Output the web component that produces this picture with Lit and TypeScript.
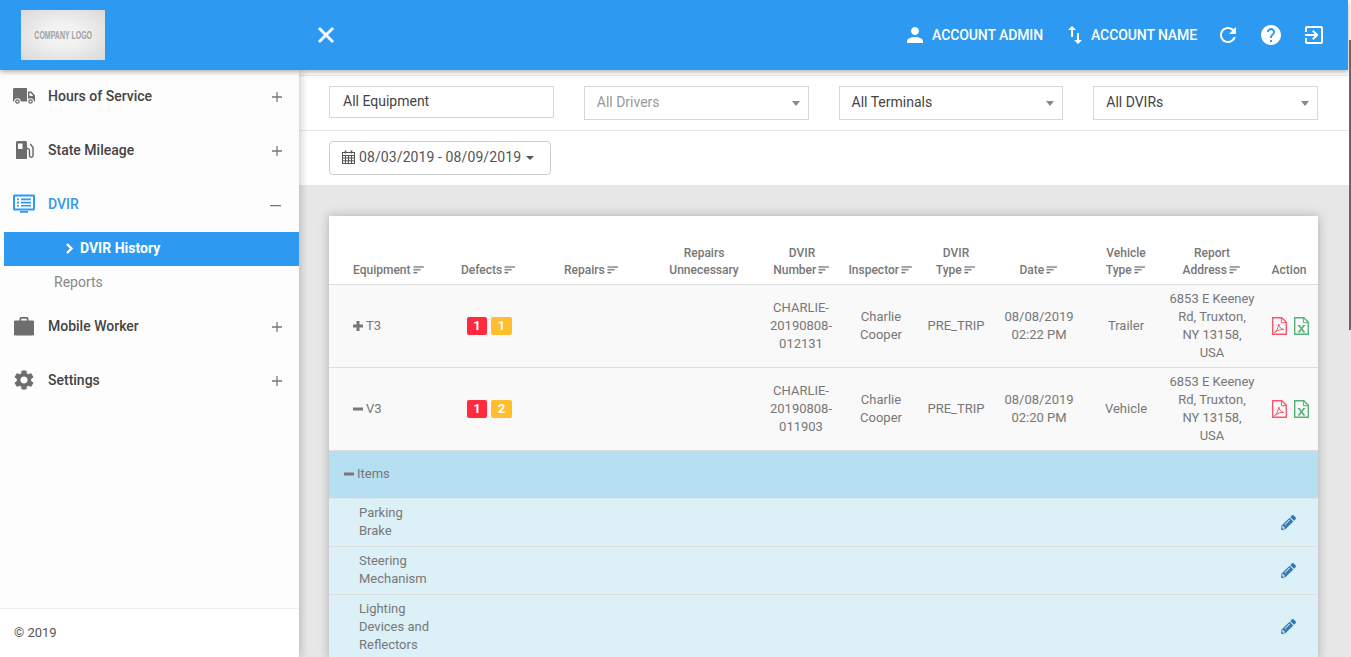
import {LitElement, html, css, svg} from 'lit';
import {customElement} from 'lit/decorators.js';

const icon = (d: string, cls = '', box = '0 0 24 24') =>
  html`<svg class=${cls} viewBox=${box} fill="currentColor"><path d=${d}></path></svg>`;

const P = {
  gear: 'M19.14 12.94c.04-.3.06-.61.06-.94 0-.32-.02-.64-.07-.94l2.03-1.58c.18-.14.23-.41.12-.61l-1.92-3.32c-.12-.22-.37-.29-.59-.22l-2.39.96c-.5-.38-1.03-.7-1.62-.94l-.36-2.54c-.04-.24-.24-.41-.48-.41h-3.84c-.24 0-.43.17-.47.41l-.36 2.54c-.59.24-1.13.57-1.62.94l-2.39-.96c-.22-.08-.47 0-.59.22L2.74 8.87c-.12.21-.08.47.12.61l2.03 1.58c-.05.3-.09.63-.09.94s.02.64.07.94l-2.03 1.58c-.18.14-.23.41-.12.61l1.92 3.32c.12.22.37.29.59.22l2.39-.96c.5.38 1.03.7 1.62.94l.36 2.54c.05.24.24.41.48.41h3.84c.24 0 .44-.17.47-.41l.36-2.54c.59-.24 1.13-.56 1.62-.94l2.39.96c.22.08.47 0 .59-.22l1.92-3.32c.12-.22.07-.47-.12-.61l-2.01-1.58zM12 15.6c-1.98 0-3.6-1.62-3.6-3.6s1.62-3.6 3.6-3.6 3.6 1.62 3.6 3.6-1.62 3.6-3.6 3.6z',
  close: 'M19 6.41L17.59 5 12 10.59 6.41 5 5 6.41 10.59 12 5 17.59 6.41 19 12 13.41 17.59 19 19 17.59 13.41 12z',
  person: 'M12 12c2.21 0 4-1.79 4-4s-1.79-4-4-4-4 1.79-4 4 1.79 4 4 4zm0 2c-2.67 0-8 1.34-8 4v2h16v-2c0-2.66-5.33-4-8-4z',
  swap: 'M16 17.01V10h-2v7.01h-3L15 21l4-3.99h-3zM9 3L5 6.99h3V14h2V6.99h3L9 3z',
  refresh: 'M17.65 6.35C16.2 4.9 14.21 4 12 4c-4.42 0-7.99 3.58-7.99 8s3.57 8 7.99 8c3.73 0 6.84-2.55 7.73-6h-2.08c-.82 2.33-3.04 4-5.65 4-3.31 0-6-2.69-6-6s2.69-6 6-6c1.66 0 3.14.69 4.22 1.78L13 11h7V4l-2.35 2.35z',
  help: 'M12 2C6.48 2 2 6.48 2 12s4.48 10 10 10 10-4.48 10-10S17.52 2 12 2zm1 17h-2v-2h2v2zm2.07-7.75l-.9.92C13.45 12.9 13 13.5 13 15h-2v-.5c0-1.1.45-2.1 1.17-2.83l1.24-1.26c.37-.36.59-.86.59-1.41 0-1.1-.9-2-2-2s-2 .9-2 2H8c0-2.21 1.79-4 4-4s4 1.79 4 4c0 .88-.36 1.68-.93 2.25z',
  exit: 'M10.09 15.59L11.5 17l5-5-5-5-1.41 1.41L12.67 11H3v2h9.67l-2.58 2.59zM19 3H5c-1.11 0-2 .9-2 2v4h2V5h14v14H5v-4H3v4c0 1.1.89 2 2 2h14c1.1 0 2-.9 2-2V5c0-1.1-.9-2-2-2z',
  sort: 'M3 18h6v-2H3v2zM3 6v2h18V6H3zm0 7h12v-2H3v2z',
  pencil: 'M497.9 142.1l-46.1 46.1c-4.7 4.7-12.3 4.7-17 0l-111-111c-4.7-4.7-4.7-12.3 0-17l46.1-46.1c18.7-18.7 49.1-18.7 67.9 0l60.1 60.1c18.8 18.7 18.8 49.1 0 67.9zM284.2 99.8L21.6 362.4.4 483.9c-2.9 16.4 11.4 30.6 27.8 27.8l121.5-21.3 262.6-262.6c4.7-4.7 4.7-12.3 0-17l-111-111c-4.8-4.7-12.4-4.7-17.1 0zM124.1 339.9c-5.5-5.5-5.5-14.3 0-19.8l154-154c5.500-5.500 14.300-5.500 19.800 0s5.500 14.300 0 19.800l-154 154c-5.500 5.500-14.300 5.500-19.800 0zM88 424h48v36.300l-64.500 11.300-31.100-31.100L51.700 376H88v48z',
};

const truckIcon = html`<svg class="nav-icon" viewBox="0 0 22 22" fill="currentColor">
  <path d="M0 4.500C0 3.700.7 3 1.500 3H14v13.500H0z"></path>
  <path fill-rule="evenodd" d="M15 6.500h3.500L22 10.500v6h-7zM16.500 8v3h3.800l-2.500-3z"></path>
  <circle cx="4.500" cy="16.500" r="3.300" fill="#fdfdfd"></circle>
  <circle cx="4.500" cy="16.500" r="1.700" fill="none" stroke="currentColor" stroke-width="1.300"></circle>
  <circle cx="17.500" cy="16.500" r="3.300" fill="#fdfdfd"></circle>
  <circle cx="17.500" cy="16.500" r="1.700" fill="none" stroke="currentColor" stroke-width="1.300"></circle>
</svg>`;

const gasIcon = html`<svg class="nav-icon" viewBox="0 0 22 22" fill="currentColor">
  <path fill-rule="evenodd" d="M3 3.500C3 2.700 3.700 2 4.500 2h8c.8 0 1.500.7 1.500 1.500V20H3zM5 4.500V10h4.500V4.500z"></path>
  <path d="M14 9.500c2-.2 2.500 1 2.500 2.500v4.500c0 2.200 3.500 2.200 3.500 0V8.500L17.300 5" fill="none" stroke="currentColor" stroke-width="1.500"></path>
</svg>`;

const dvirIcon = html`<svg class="nav-icon" viewBox="0 0 22 22" fill="currentColor">
  <path fill-rule="evenodd" d="M1.500 1.500h19c.8 0 1.500.7 1.500 1.500v13c0 .8-.7 1.500-1.500 1.500h-19C.7 17.500 0 16.800 0 16V3c0-.8.7-1.500 1.500-1.500zM2 3.500V15.500h18V3.500z"></path>
  <path d="M4 5.500h2v1.700H4zM8 5.500h10v1.700H8zM4 8.700h2v1.700H4zM8 8.700h10v1.700H8zM4 11.900h2v1.700H4zM8 11.900h10v1.700H8zM7 18h8v1.800H7z"></path>
</svg>`;

const caseIcon = html`<svg class="nav-icon" viewBox="0 0 22 22" fill="currentColor">
  <path fill-rule="evenodd" d="M2.500 5.500H6.500V3.500C6.500 2.700 7.200 2 8 2h6c.8 0 1.500.7 1.500 1.500v2h4c1 0 1.500.6 1.500 1.500v12c0 1-.6 1.500-1.500 1.500h-17C1.500 20.500 1 20 1 19V7c0-1 .6-1.500 1.500-1.500zM8.200 3.700v1.800h5.600V3.700z"></path>
</svg>`;

const calendarIcon = html`<svg class="cal" viewBox="0 0 13 14" fill="none" stroke="currentColor" stroke-width="1">
  <rect x=".5" y="2.500" width="12" height="11"></rect>
  <path d="M.5 5.500h12M.5 8h12M.5 10.800h12M3.500 5.500v8M6.500 5.500v8M9.500 5.500v8"></path>
  <path d="M3.500 .5v3M9.500 .5v3" stroke-width="1.600"></path>
</svg>`;

const pdfIcon = html`<svg class="file pdf" viewBox="0 0 15 18" fill="none" stroke="currentColor" stroke-width="1.400">
  <path d="M.7.7h9.100l4.500 4.500v12.100H.7z"></path>
  <path d="M9.400.7v5h4.900" stroke-width="1"></path>
  <path d="M2.500 15.500c2-1 3.500-4 4.300-8.500.6 3.500 2.200 5 5.200 5.500-3-.3-6.500.6-9.500 3z" stroke-width="1"></path>
</svg>`;

const xlsIcon = html`<svg class="file xls" viewBox="0 0 15 18" fill="none" stroke="currentColor" stroke-width="1.400">
  <path d="M.7.7h9.100l4.500 4.500v12.100H.7z"></path>
  <path d="M9.400.7v5h4.900" stroke-width="1"></path>
  <path d="M3.800 8.500h2.400M8.800 8.500h2.400M3.800 15h2.400M8.800 15h2.400" stroke-width="1"></path>
  <path d="M5 8.500l5 6.500M10 8.500l-5 6.500" stroke-width="1.600"></path>
</svg>`;

interface NavItem { label: string; icon: unknown; open?: boolean; subs?: string[]; }

const NAV: NavItem[] = [
  {label: 'Hours of Service', icon: truckIcon},
  {label: 'State Mileage', icon: gasIcon},
  {label: 'DVIR', icon: dvirIcon, open: true, subs: ['DVIR History', 'Reports']},
  {label: 'Mobile Worker', icon: caseIcon},
  {label: 'Settings', icon: icon(P.gear, 'nav-icon gear')},
];

const COLUMNS: Array<{label: string; cls?: string; sort?: boolean}> = [
  {label: 'Equipment', cls: 'left first', sort: true},
  {label: 'Defects', cls: 'left', sort: true},
  {label: 'Repairs', cls: 'left', sort: true},
  {label: 'Repairs\nUnnecessary'},
  {label: 'DVIR\nNumber', sort: true},
  {label: 'Inspector', sort: true},
  {label: 'DVIR\nType', sort: true},
  {label: 'Date', cls: 'nudge', sort: true},
  {label: 'Vehicle\nType', sort: true},
  {label: 'Report\nAddress', sort: true},
  {label: 'Action', cls: 'nudge'},
];

const WIDTHS = [124, 103, 88, 120, 76, 82, 68, 100, 72, 100, 56];

const ROWS = [
  {open: false, eq: 'T3', red: 1, amber: 1, num: 'CHARLIE-\n20190808-\n012131', date: '08/08/2019\n02:22 PM', type: 'Trailer'},
  {open: true, eq: 'V3', red: 1, amber: 2, num: 'CHARLIE-\n20190808-\n011903', date: '08/08/2019\n02:20 PM', type: 'Vehicle'},
];

const ITEMS = ['Parking\nBrake', 'Steering\nMechanism', 'Lighting\nDevices and\nReflectors'];

@customElement('app-root')
export class AppRoot extends LitElement {
  static styles = css`
    :host {
      display: block;
      position: relative;
      width: 1351px;
      height: 657px;
      overflow: hidden;
      background: #fff;
      font-family: Roboto, "Liberation Sans", sans-serif;
      font-size: 13px;
      color: #777;
    }
    svg { display: block; flex: none; }

    .header {
      position: relative;
      z-index: 3;
      box-sizing: border-box;
      width: 1348px;
      height: 70px;
      display: flex;
      align-items: center;
      background: #2d99f0;
      box-shadow: 0 2px 5px rgba(0, 0, 0, 0.3);
      color: #fff;
      padding-left: 21px;
    }
    .logo {
      width: 84px;
      height: 50px;
      display: flex;
      align-items: center;
      justify-content: center;
      background: radial-gradient(ellipse at center, #f2f2f2 30%, #d9d9d9 100%);
      color: #a0a0a0;
      font-family: "Liberation Sans", sans-serif;
      font-size: 10px;
      font-weight: 700;
      white-space: nowrap;
    }
    .logo span { display: inline-block; transform: scaleX(0.7); }
    .close {
      width: 26px;
      height: 26px;
      margin-left: 208px;
      stroke: currentColor;
      stroke-width: 0.8;
    }
    .header-right {
      margin-left: auto;
      display: flex;
      align-items: center;
      padding-right: 22px;
      font-size: 14px;
      font-weight: 500;
    }
    .acct { display: flex; align-items: center; letter-spacing: -0.1px; }
    .acct svg { width: 24px; height: 24px; }
    .acct.one svg { margin-right: 5px; }
    .acct.two svg { margin-right: 4px; }
    .acct.one { margin-right: 20px; }
    .acct.two { margin-right: 19px; }
    .action { width: 24px; height: 24px; margin-left: 19px; }
    .action.first { margin-left: 0; }

    .body { display: flex; height: 587px; }

    .sidebar {
      position: relative;
      z-index: 2;
      width: 299px;
      flex: none;
      display: flex;
      flex-direction: column;
      background: #fff;
      box-shadow: 2px 0 8px rgba(0, 0, 0, 0.2);
    }
    .nav { flex: 1; background: #fdfdfd; }
    .nav-row {
      box-sizing: border-box;
      height: 54px;
      display: flex;
      align-items: center;
      padding: 0 17px 0 13px;
      color: #444;
      font-size: 14px;
      font-weight: 500;
    }
    .nav-row.open { color: #2d99f0; }
    .nav-row .label { flex: 1; margin-left: 13px; margin-top: -2px; }
    .nav-icon { width: 22px; height: 22px; color: #6e6e6e; margin-top: -2px; }
    .open .nav-icon { color: #2d99f0; }
    .gear { width: 24px; height: 24px; margin: -2px -1px 0; }
    .toggle { width: 10px; height: 10px; color: #777; }
    .open .toggle { width: 11px; height: 11px; margin-right: 1px; }
    .sub {
      box-sizing: border-box;
      height: 34px;
      display: flex;
      align-items: center;
      padding: 0 0 2px 54px;
      color: #888;
      font-size: 14px;
    }
    .sub.active {
      margin-left: 4px;
      padding-left: 60px;
      gap: 5px;
      background: #2d99f0;
      color: #fff;
      font-weight: 700;
    }
    .chev { width: 11px; height: 11px; }
    .foot {
      box-sizing: border-box;
      height: 49px;
      border-top: 1px solid #eee;
      display: flex;
      align-items: center;
      padding: 0 0 2px 14px;
      color: #555;
    }

    .main {
      flex: 1;
      min-width: 0;
      background: #e7e7e7;
    }
    .filters {
      background: #fff;
      padding-top: 5px;
    }
    .filter-row {
      box-sizing: border-box;
      height: 55px;
      padding: 10px 33px 0 30px;
      border-top: 1px solid #e6e9ee;
    }
    .filter-row.selects {
      display: grid;
      grid-template-columns: repeat(4, 1fr);
      gap: 30px;
      align-items: start;
    }
    .field {
      box-sizing: border-box;
      height: 34px;
      display: flex;
      align-items: center;
      justify-content: space-between;
      border: 1px solid #d2d6de;
      padding: 0 8px 2px 12px;
      font-size: 14px;
      color: #444;
    }
    .field.input { height: 32px; padding-left: 13px; }
    .field.muted { color: #999; }
    .field i {
      width: 0;
      height: 0;
      margin-top: 2px;
      border-left: 4px solid transparent;
      border-right: 4px solid transparent;
      border-top: 5px solid #888;
    }
    .date-btn {
      box-sizing: border-box;
      display: inline-flex;
      align-items: center;
      height: 34px;
      width: 222px;
      border: 1px solid #ccc;
      border-radius: 4px;
      padding: 0 0 2px 12px;
      font-size: 14px;
      letter-spacing: 0.1px;
      color: #555;
    }
    .cal { width: 13px; height: 14px; margin-right: 4px; }
    .date-btn i {
      margin-left: 5px;
      margin-top: 2px;
      width: 0;
      height: 0;
      border-left: 4px solid transparent;
      border-right: 4px solid transparent;
      border-top: 4px solid #555;
    }

    .card {
      margin: 31px 33px 0 30px;
      background: #fff;
      box-shadow: 0 0 10px rgba(0, 0, 0, 0.25);
    }
    table {
      width: 989px;
      table-layout: fixed;
      border-collapse: collapse;
    }
    th {
      height: 68px;
      box-sizing: border-box;
      padding: 0 0 5px;
      vertical-align: bottom;
      text-align: center;
      font-size: 12px;
      font-weight: 500;
      line-height: 17px;
      color: #777;
      white-space: pre-line;
      border-bottom: 1px solid #ddd;
    }
    th.left, td.left { text-align: left; padding-left: 8px; }
    th.first, td.first { padding-left: 24px; }
    th.nudge, td.nudge { padding-right: 2px; }
    .sort {
      display: inline-block;
      width: 13.5px;
      height: 13.5px;
      margin-left: 1px;
      color: #777;
      stroke: currentColor;
      stroke-width: 0.5;
      vertical-align: -3px;
    }
    td {
      box-sizing: border-box;
      height: 83px;
      padding: 5px 0;
      text-align: center;
      vertical-align: middle;
      line-height: 18px;
      white-space: pre-line;
      background: #f9f9f9;
      border-bottom: 1px solid #ddd;
    }
    .eq { display: inline-flex; align-items: center; gap: 3px; }
    .eq.row { padding-top: 2px; }
    .pm { width: 10px; height: 10px; color: #777; }
    .badge {
      display: inline-block;
      box-sizing: border-box;
      height: 18px;
      min-width: 20px;
      border-radius: 2px;
      margin-right: 4px;
      text-align: center;
      line-height: 18px;
      color: #fff;
      font-size: 13px;
      font-weight: 700;
    }
    td.left.bad { padding-left: 14px; }
    .badge.red { background: #ff2a3f; }
    .badge.amber { background: #ffbe2c; width: 21px; margin-right: 0; }
    .files { display: flex; gap: 7px; padding-left: 10px; }
    .file { width: 15px; height: 18px; }
    .pdf { color: #f8576e; }
    .xls { color: #55b278; }

    tr.items td {
      height: 48px;
      background: #b6dff1;
      text-align: left;
      padding-left: 15px;
      border-bottom: 1px solid #d9e5ea;
    }
    tr.item td {
      height: 48px;
      background: #dcf0f8;
      text-align: left;
      padding: 5px 0 5px 30px;
      border-bottom: 1px solid #dddddd;
    }
    tr.item td.pen-cell { padding: 0 22px 0 0; }
    .pen { width: 15px; height: 15px; color: #337ab7; margin-left: auto; }

    .thumb {
      position: absolute;
      z-index: 4;
      top: 40px;
      right: 0;
      width: 2px;
      height: 290px;
      background: #666;
    }
  `;

  private plusMinus(open: boolean) {
    return html`<svg class="pm" viewBox="0 0 10 10" fill="currentColor">
      ${open
        ? svg`<rect x="0" y="3.5" width="10" height="3" rx=".5"></rect>`
        : svg`<path d="M3.500 0h3v3.500H10v3H6.500V10h-3V6.500H0v-3h3.500z"></path>`}
    </svg>`;
  }

  private renderNav() {
    return NAV.map((item) => html`
      <div class="nav-row ${item.open ? 'open' : ''}">
        ${item.icon}
        <span class="label">${item.label}</span>
        <svg class="toggle" viewBox="0 0 11 11" fill="currentColor">
          ${item.open
            ? svg`<rect x="0" y="5" width="11" height="1.300"></rect>`
            : svg`<path d="M4.800 0h1.400v4.800H11v1.400H6.200V11H4.800V6.200H0V4.800h4.800z"></path>`}
        </svg>
      </div>
      ${(item.subs ?? []).map((sub, i) => i === 0
        ? html`<div class="sub active">
            <svg class="chev" viewBox="0 0 11 11" fill="none" stroke="currentColor" stroke-width="2.400"><path d="M3 1l4.500 4.500L3 10"></path></svg>
            ${sub}
          </div>`
        : html`<div class="sub">${sub}</div>`)}
    `);
  }

  private renderRow(row: (typeof ROWS)[number]) {
    return html`<tr>
      <td class="left first"><span class="eq row">${this.plusMinus(row.open)}${row.eq}</span></td>
      <td class="left bad"><span class="badge red">${row.red}</span><span class="badge amber">${row.amber}</span></td>
      <td></td>
      <td></td>
      <td class="nudge">${row.num}</td>
      <td>${'Charlie\nCooper'}</td>
      <td>PRE_TRIP</td>
      <td class="nudge">${row.date}</td>
      <td>${row.type}</td>
      <td>${'6853 E Keeney\nRd, Truxton,\nNY 13158,\nUSA'}</td>
      <td><div class="files">${pdfIcon}${xlsIcon}</div></td>
    </tr>`;
  }

  render() {
    return html`
      <header class="header">
        <div class="logo"><span>COMPANY LOGO</span></div>
        ${icon(P.close, 'close')}
        <div class="header-right">
          <div class="acct one">${icon(P.person)}ACCOUNT ADMIN</div>
          <div class="acct two">${icon(P.swap)}ACCOUNT NAME</div>
          ${icon(P.refresh, 'action first')}
          ${icon(P.help, 'action')}
          ${icon(P.exit, 'action')}
        </div>
      </header>
      <div class="body">
        <aside class="sidebar">
          <nav class="nav">${this.renderNav()}</nav>
          <div class="foot">© 2019</div>
        </aside>
        <main class="main">
          <section class="filters">
            <div class="filter-row selects">
              <div class="field input">All Equipment</div>
              <div class="field muted">All Drivers<i></i></div>
              <div class="field">All Terminals<i></i></div>
              <div class="field">All DVIRs<i></i></div>
            </div>
            <div class="filter-row">
              <div class="date-btn">${calendarIcon}08/03/2019 - 08/09/2019<i></i></div>
            </div>
          </section>
          <section class="card">
            <table>
              <colgroup>${WIDTHS.map((w) => html`<col style="width:${w}px" />`)}</colgroup>
              <thead>
                <tr>
                  ${COLUMNS.map((c) => html`<th class=${c.cls ?? ''}>${c.label}${c.sort ? icon(P.sort, 'sort') : ''}</th>`)}
                </tr>
              </thead>
              <tbody>
                ${ROWS.map((r) => this.renderRow(r))}
                <tr class="items"><td colspan="11"><span class="eq">${this.plusMinus(true)}Items</span></td></tr>
                ${ITEMS.map((it) => html`<tr class="item">
                  <td colspan="2">${it}</td>
                  <td colspan="8"></td>
                  <td class="pen-cell">${icon(P.pencil, 'pen', '0 0 512 512')}</td>
                </tr>`)}
              </tbody>
            </table>
          </section>
        </main>
      </div>
      <div class="thumb"></div>
    `;
  }
}
